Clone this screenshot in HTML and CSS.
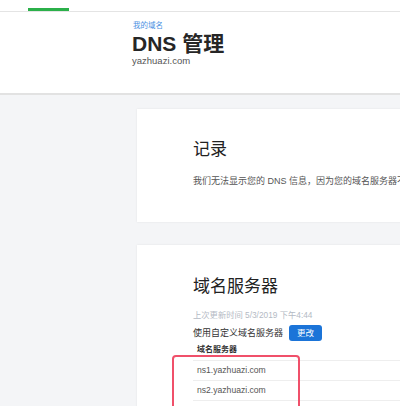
FILE: index.html
```html
<!DOCTYPE html>
<html lang="zh">
<head>
<meta charset="utf-8">
<link rel="stylesheet" href="styles.css">
</head>
<body>
<div class="topnav"><div class="tab-active"></div></div>
<header class="header">
  <div class="crumb">我的域名</div>
  <h1 class="title">DNS 管理</h1>
  <div class="domain">yazhuazi.com</div>
</header>
<main class="main">
  <section class="card card-records">
    <h2 class="card-title">记录</h2>
    <p class="card-text">我们无法显示您的 DNS 信息，因为您的域名服务器不受我们管理。</p>
  </section>
  <section class="card card-ns">
    <h2 class="card-title">域名服务器</h2>
    <div class="meta">上次更新时间 5/3/2019 下午4:44</div>
    <div class="ns-row">
      <span class="ns-label">使用自定义域名服务器</span>
      <button class="btn">更改</button>
    </div>
    <div class="table">
      <div class="th">域名服务器</div>
      <div class="td">ns1.yazhuazi.com</div>
      <div class="td">ns2.yazhuazi.com</div>
      <div class="td"></div>
    </div>
    <div class="highlight"></div>
  </section>
</main>
</body>
</html>
```
FILE: styles.css
```css
* { box-sizing: border-box; }
html, body { margin: 0; padding: 0; }
body {
  background: #f4f5f7;
  font-family: "Liberation Sans", "Noto Sans CJK SC", sans-serif;
  color: #222;
  overflow: hidden;
  height: 406px;
}
.topnav {
  height: 12px;
  background: #fff;
  border-bottom: 1px solid #e4e4e4;
  padding-left: 28px;
  padding-top: 8px;
}
.tab-active {
  width: 41px;
  height: 3px;
  background: #2bb04a;
}
.header {
  background: #fff;
  height: 83px;
  border-bottom: 2px solid #e2e2e2;
  padding: 9px 0 0 132px;
}
.crumb {
  font-size: 7.5px;
  color: #4a90e2;
  line-height: 10px;
  padding-left: 1px;
}
.title {
  margin: 1.5px 0 0 0;
  font-size: 21px;
  line-height: 22px;
  font-weight: bold;
  color: #262626;
}
.domain {
  font-size: 9.5px;
  line-height: 12px;
  color: #555;
}
.main {
  padding: 14px 0 0 137px;
  display: flex;
  flex-direction: column;
  gap: 23px;
}
.card {
  background: #fff;
  width: 300px;
  box-shadow: 0 0 2px rgba(0,0,0,0.08);
  padding-left: 56px;
  position: relative;
  overflow: hidden;
}
.card-records {
  height: 113px;
  padding-top: 30px;
}
.card-title {
  margin: 0;
  font-size: 17px;
  line-height: 22px;
  font-weight: normal;
  color: #222;
}
.card-text {
  margin: 14px 0 0 0;
  font-size: 9px;
  line-height: 12px;
  color: #555;
  white-space: nowrap;
}
.card-ns {
  padding-top: 31px;
  height: 200px;
  overflow: visible;
}
.meta {
  margin-top: 11px;
  font-size: 8.3px;
  line-height: 12px;
  color: #b4bac4;
}
.ns-row {
  margin-top: 3px;
  display: flex;
  align-items: center;
  gap: 6px;
  height: 17px;
}
.ns-label {
  font-size: 9px;
  color: #333;
}
.btn {
  width: 33px;
  height: 16px;
  border: none;
  border-radius: 3px;
  background: #1b74d8;
  color: #fff;
  font-family: inherit;
  font-size: 8.5px;
  padding: 0;
  line-height: 16px;
}
.table {
  margin-top: 3px;
}
.th {
  font-size: 8px;
  font-weight: bold;
  color: #333;
  padding-left: 4px;
  height: 17px;
  line-height: 12px;
  border-bottom: 1px solid #eeeeee;
}
.td {
  font-size: 8.6px;
  color: #555;
  padding-left: 4px;
  height: 20px;
  line-height: 19px;
  border-bottom: 1px solid #eeeeee;
}
.highlight {
  position: absolute;
  left: 35px;
  top: 110px;
  width: 128px;
  height: 80px;
  border: 2px solid #f0506a;
  border-radius: 4px;
}
```
